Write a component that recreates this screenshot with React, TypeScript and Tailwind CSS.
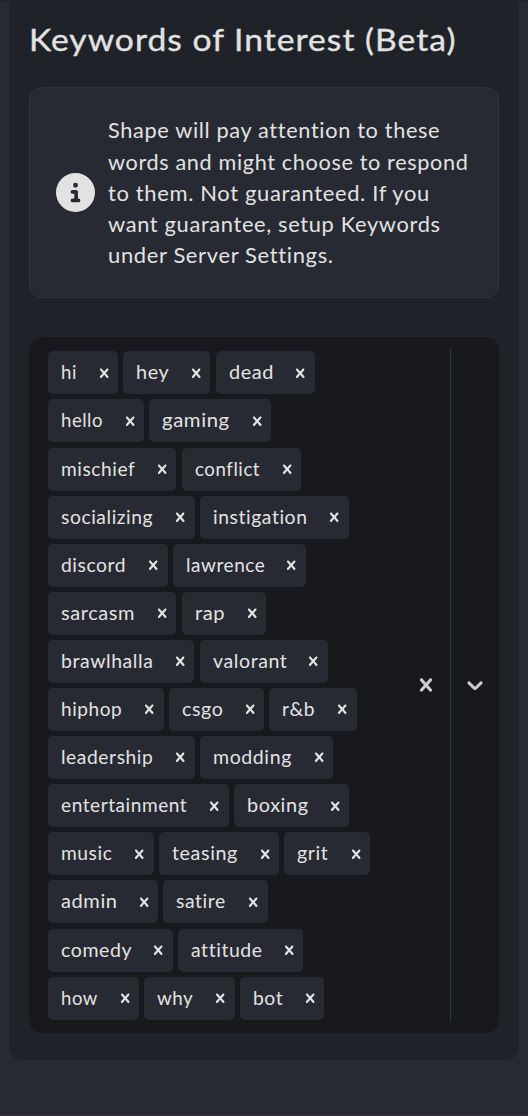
import { useLayoutEffect, useRef } from "react";
import { FaCircleInfo } from "react-icons/fa6";

// Widens a line of text so that it fills the given width.
function Line({ text, width }: { text: string; width: number }) {
  const ref = useRef<HTMLSpanElement>(null);
  useLayoutEffect(() => {
    const el = ref.current;
    if (!el) return;
    el.style.transform = `scaleX(${width / el.offsetWidth})`;
  }, [text, width]);
  return (
    <span ref={ref} className="inline-block origin-left tracking-[0.03em] whitespace-pre">
      {text}
    </span>
  );
}

function Cross({ className }: { className: string }) {
  return (
    <svg viewBox="0 0 20 20" fill="currentColor" className={className}>
      <path d="M14.348 14.849c-0.469 0.469-1.229 0.469-1.697 0l-2.651-3.030-2.651 3.029c-0.469 0.469-1.229 0.469-1.697 0-0.469-0.469-0.469-1.229 0-1.697l2.758-3.15-2.759-3.152c-0.469-0.469-0.469-1.228 0-1.697s1.228-0.469 1.697 0l2.652 3.031 2.651-3.031c0.469-0.469 1.228-0.469 1.697 0s0.469 1.229 0 1.697l-2.758 3.152 2.758 3.15c0.469 0.469 0.469 1.229 0 1.698z" />
    </svg>
  );
}

const rows: [string, number][][] = [
  [["hi", 70], ["hey", 87.2], ["dead", 99.2]],
  [["hello", 96], ["gaming", 122]],
  [["mischief", 128.4], ["conflict", 119.6]],
  [["socializing", 146.6], ["instigation", 149]],
  [["discord", 119.6], ["lawrence", 133]],
  [["sarcasm", 128.4], ["rap", 84.4]],
  [["brawlhalla", 146.4], ["valorant", 128]],
  [["hiphop", 115.7], ["csgo", 95.4], ["r&b", 87.2]],
  [["leadership", 146.6], ["modding", 133.2]],
  [["entertainment", 180.6], ["boxing", 115.2]],
  [["music", 105.8], ["teasing", 120.1], ["grit", 85.8]],
  [["admin", 110.3], ["satire", 104.2]],
  [["comedy", 124.7], ["attitude", 125.3]],
  [["how", 91], ["why", 90.5], ["bot", 84.2]],
];

const notice: [string, number][] = [
  ["Shape will pay attention to these", 332],
  ["words and might choose to respond", 360.5],
  ["to them. Not guaranteed. If you", 321.5],
  ["want guarantee, setup Keywords", 332.5],
  ["under Server Settings.", 225.5],
];

export default function App() {
  return (
    <div className="flex h-[1116px] w-[528px] flex-col border-b border-[#393436] bg-[#282a33] font-['Lato',sans-serif] text-[#e2e2e2]">
      <div className="h-0.5 shrink-0 bg-[#1f2229]" />
      <main className="mr-[9px] ml-[9px] h-[1058px] rounded-b-[13px] bg-[#1f2229] pt-4 pr-5 pl-[19.5px]">
        <h2 className="h-[42px] text-[31.5px] leading-[42px] [-webkit-text-stroke:0.35px_#e2e2e2]">
          <Line text="Keywords of Interest (Beta)" width={427} />
        </h2>
        <section className="mt-[27px] flex h-[211px] w-[470.5px] items-center rounded-[13px] border border-[#2a3442] bg-[#282a33] pl-[26px]">
          <FaCircleInfo className="size-[39px] shrink-0" />
          <div className="ml-[13px] text-[21px] leading-[31.3px]">
            {notice.map(([text, width]) => (
              <div key={text} className="h-[31.3px]">
                <Line text={text} width={width} />
              </div>
            ))}
          </div>
        </section>
        <section className="mt-[39px] flex h-[696px] w-[470px] rounded-[13px] bg-[#18191d]">
          <div className="flex w-[372px] flex-col gap-[5.1px] pt-[14.4px] pl-[19.5px]">
            {rows.map((row) => (
              <div key={row[0][0]} className="flex gap-[5.2px]">
                {row.map(([word, width]) => (
                  <div
                    key={word}
                    style={{ width }}
                    className="flex h-[43px] shrink-0 items-center justify-between rounded-[5px] bg-[#282a33] pr-[5px] pl-[13px] text-[18.5px] leading-6"
                  >
                    <div className="-mt-px">
                      <Line text={word} width={width - 54} />
                    </div>
                    <Cross className="size-[18.4px] shrink-0" />
                  </div>
                ))}
              </div>
            ))}
          </div>
          <div className="flex flex-1 items-center justify-end">
            <Cross className="mr-[11px] size-[26px] shrink-0 text-[#cccccc]" />
            <div className="my-[11px] w-px self-stretch bg-[#2b3848]" />
            <div className="flex w-12 justify-center">
              <svg viewBox="0 0 20 20" fill="currentColor" className="size-[26px] text-[#cccccc]">
                <path d="M4.516 7.548c0.436-0.446 1.043-0.481 1.576 0l3.908 3.747 3.908-3.747c0.533-0.481 1.141-0.446 1.574 0 0.436 0.445 0.408 1.197 0 1.615-0.406 0.418-4.695 4.502-4.695 4.502-0.217 0.223-0.502 0.335-0.787 0.335s-0.57-0.112-0.789-0.335c0 0-4.287-4.084-4.695-4.502s-0.436-1.17 0-1.615z" />
              </svg>
            </div>
          </div>
        </section>
      </main>
    </div>
  );
}
